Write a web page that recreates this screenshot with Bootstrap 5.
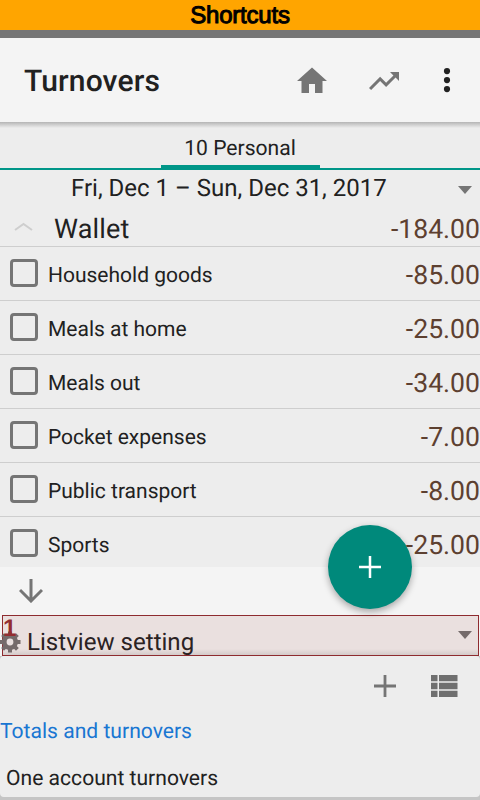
<!DOCTYPE html>
<html lang="en">
<head>
<meta charset="utf-8">
<meta name="viewport" content="width=device-width, initial-scale=1">
<title>Turnovers</title>
<link href="https://cdn.jsdelivr.net/npm/bootstrap@5.3.0/dist/css/bootstrap.min.css" rel="stylesheet">
<style>
body{font-family:Roboto,"Liberation Sans",sans-serif;background:#f4f4f4;color:#212121;width:480px;height:800px;overflow:hidden;line-height:1;white-space:nowrap;text-rendering:geometricPrecision}
svg{display:block;flex:none}
.banner{height:38px;background:orange;border-bottom:8px solid #757575;color:#000;font:24px/31px "Liberation Sans",sans-serif;-webkit-text-stroke:1px #000;letter-spacing:-.2px}
.appbar{height:84px;background:#f4f4f4;padding:2px 27px 0 24px;z-index:2}
.appbar::after{content:"";position:absolute;left:0;right:0;top:100%;height:6px;background:linear-gradient(#b5b5b5,#ededed)}
.appbar h1{font-size:30px;font-weight:500;letter-spacing:.15px;padding-top:2px}
.trend{margin-left:36px;margin-right:39px}
.tabs{height:48px;border-bottom:2px solid #009688;background:#ededed}
.tab-on{width:159px;height:48px;border-bottom:5px solid #009688;font-size:21.100px;padding-top:16px}
.period{height:38px;background:#ededed;font-size:24px;padding:0 8px 2px 71px}
.wallet{height:39px;background:#ededed;border-bottom:1px solid #cecece;padding:5px 0 0 14px;font-size:27px}
.wallet-name{padding-left:21px;letter-spacing:.15px}
.entry{height:54px;background:#ededed;border-bottom:1px solid #cecece;padding:4px 0 0 10px;font-size:21px}
.entry:last-child{height:50px;border:0;padding-top:7px}
.entry-name{padding-top:1px;line-height:22px}
.box{width:28px;height:28px;border:3px solid #757575;border-radius:4px;margin-right:10px;margin-top:-6px}
.amount{font-size:26.600px;line-height:28px;padding-top:1px;color:#5d4030}
.down{height:48px;padding-left:19px}
.setting{height:41px;margin:0 1px 0 2px;border:1px solid #8e2b2f;background:linear-gradient(#eae0df 0 33px,#d0c7c6 40px);color:#2b2223;font-size:24.100px;z-index:1}
.setting-name{padding:13px 0 0 6px}
.gear{margin-left:-4px;margin-top:12px}
.caret{margin-bottom:1px}
.num{left:0;top:1px;font:bold 24px/24px "Liberation Sans",sans-serif;color:#932d30}
.panel{height:141px;background:#ededed;border-radius:4px}
.below{background:#c5c5c5;height:144px}
.tools{height:59px;padding:0 22px 0 0;gap:35px}
.link-title{font-size:21.100px;line-height:33px;color:#1976d2}
.account-name{font-size:21.100px;line-height:22px;padding:20px 0 0 6px}
.fab{left:328px;top:525px;width:84px;height:84px;border-radius:50%;background:#00897b;box-shadow:0 3px 7px rgba(0,0,0,.32);z-index:3}
</style>
<script src="https://cdn.jsdelivr.net/npm/bootstrap@5.3.0/dist/js/bootstrap.bundle.min.js"></script>
</head>
<body class="position-relative">
<div class="banner text-center">Shortcuts</div>
<header class="appbar d-flex align-items-center position-relative">
  <h1 class="m-0 me-auto">Turnovers</h1>
  <svg width="36" height="36" viewBox="0 0 24 24" fill="#757575"><path d="M10 20v-6h4v6h5v-8h3L12 3 2 12h3v8z"/></svg>
  <svg class="trend" width="36" height="36" viewBox="0 0 24 24" fill="#757575"><path d="M16 6l2.290 2.290-4.880 4.880-4-4L2 16.590 3.410 18l6-6 4 4 6.300-6.290L22 12V6z"/></svg>
  <svg width="12" height="26" viewBox="0 0 12 26" fill="#212121"><circle cx="6" cy="3.100" r="3.100"/><circle cx="6" cy="12.100" r="3.100"/><circle cx="6" cy="21.100" r="3.100"/></svg>
</header>
<nav class="tabs d-flex justify-content-center"><div class="tab-on text-center">10 Personal</div></nav>
<div class="period d-flex align-items-center justify-content-between"><span>Fri, Dec 1 – Sun, Dec 31, 2017</span><svg class="mt-1" width="14" height="8" viewBox="0 0 14 8"><path d="M0 0h14L7 8z" fill="#757575"/></svg></div>
<div class="wallet d-flex align-items-center"><svg class="mb-2" width="19" height="10" viewBox="0 0 19 10"><path d="M1 9 9.500 3 18 9" fill="none" stroke="#cecece" stroke-width="2"/></svg><span class="wallet-name me-auto">Wallet</span><span class="amount">-184.00</span></div>
<div>
  <div class="entry d-flex align-items-center"><span class="box"></span><span class="entry-name me-auto">Household goods</span><span class="amount">-85.00</span></div>
  <div class="entry d-flex align-items-center"><span class="box"></span><span class="entry-name me-auto">Meals at home</span><span class="amount">-25.00</span></div>
  <div class="entry d-flex align-items-center"><span class="box"></span><span class="entry-name me-auto">Meals out</span><span class="amount">-34.00</span></div>
  <div class="entry d-flex align-items-center"><span class="box"></span><span class="entry-name me-auto">Pocket expenses</span><span class="amount">-7.00</span></div>
  <div class="entry d-flex align-items-center"><span class="box"></span><span class="entry-name me-auto">Public transport</span><span class="amount">-8.00</span></div>
  <div class="entry d-flex align-items-center"><span class="box"></span><span class="entry-name me-auto">Sports</span><span class="amount">-25.00</span></div>
</div>
<div class="down d-flex align-items-center"><svg width="24" height="24" viewBox="0 0 24 24"><path d="M12 0v22M1 11l11 11 11-11" fill="none" stroke="#757575" stroke-width="3"/></svg></div>
<div class="setting d-flex align-items-center position-relative">
  <svg class="gear" width="22" height="22" viewBox="0 0 22 22"><circle cx="11" cy="11" r="5.700" fill="none" stroke="#756b6b" stroke-width="4.600"/><path d="M11 .5v4M11 17.500v4M.5 11h4M17.500 11h4M3.600 3.600l2.800 2.800M15.600 15.600l2.800 2.800M3.600 18.400l2.800-2.800M15.600 6.400l2.800-2.800" stroke="#756b6b" stroke-width="4"/></svg>
  <span class="num position-absolute">1</span>
  <span class="setting-name me-auto">Listview setting</span>
  <svg class="caret me-1" width="16" height="8" viewBox="0 0 16 8"><path d="M0 0h14L7 8z" fill="#756b6b"/></svg>
</div>
<div class="below"><section class="panel">
  <div class="tools d-flex justify-content-end align-items-center"><svg width="22" height="22" viewBox="0 0 22 22"><path d="M11 0v22M0 11h22" stroke="#757575" stroke-width="2.800"/></svg><svg width="27" height="22" viewBox="0 0 27 22" fill="#6f6f6f"><path d="M0 0h6.500v6.300H0zM8 0h18.500v6.300H8zM0 7.800h6.500v6.400H0zM8 7.800h18.500v6.400H8zM0 15.700h6.500V22H0zM8 15.700h18.500V22H8z"/></svg></div>
  <div class="link-title">Totals and turnovers</div>
  <div class="account-name">One account turnovers</div>
</section></div>
<button class="fab position-absolute border-0 p-0 d-flex align-items-center justify-content-center" aria-label="Add"><svg width="22" height="22" viewBox="0 0 22 22"><path d="M11 0v22M0 11h22" stroke="#fff" stroke-width="2.500"/></svg></button>
</body>
</html>
